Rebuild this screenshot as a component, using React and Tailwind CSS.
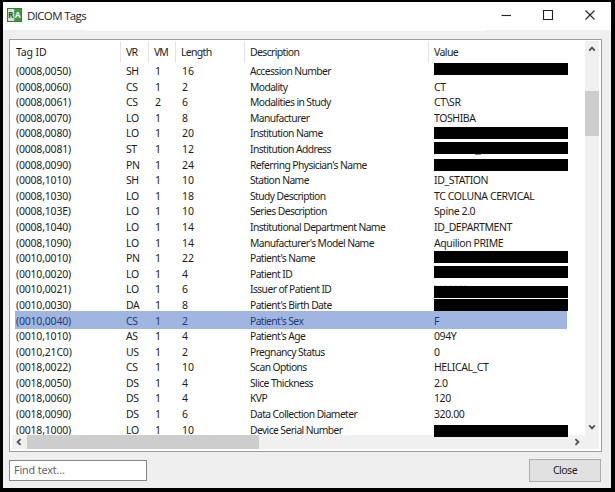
import React from "react";

const BAR = "bg-black w-[134px] h-[12px] relative z-30 ";

const rows = [
  ["(0008,0050)", "SH", "1", "16", "Accession Number", null, "mt-0"],
  ["(0008,0060)", "CS", "1", "2", "Modality", "CT"],
  ["(0008,0061)", "CS", "2", "6", "Modalities in Study", "CT\\SR"],
  ["(0008,0070)", "LO", "1", "8", "Manufacturer", "TOSHIBA"],
  ["(0008,0080)", "LO", "1", "20", "Institution Name", null, "mt-[1.6px]"],
  ["(0008,0081)", "ST", "1", "12", "Institution Address", null, "mt-[1px]"],
  ["(0008,0090)", "PN", "1", "24", "Referring Physician's Name", null, "mt-[2.4px]"],
  ["(0008,1010)", "SH", "1", "10", "Station Name", "ID_STATION"],
  ["(0008,1030)", "LO", "1", "18", "Study Description", "TC COLUNA CERVICAL"],
  ["(0008,103E)", "LO", "1", "10", "Series Description", "Spine 2.0"],
  ["(0008,1040)", "LO", "1", "14", "Institutional Department Name", "ID_DEPARTMENT"],
  ["(0008,1090)", "LO", "1", "14", "Manufacturer's Model Name", "Aquilion PRIME"],
  ["(0010,0010)", "PN", "1", "22", "Patient's Name", null, "mt-[0.8px]"],
  ["(0010,0020)", "LO", "1", "4", "Patient ID", null, "mt-[0.2px]"],
  ["(0010,0021)", "LO", "1", "6", "Issuer of Patient ID", null, "mt-[4.6px]"],
  ["(0010,0030)", "DA", "1", "8", "Patient's Birth Date", null, "mt-[2px]"],
  ["(0010,0040)", "CS", "1", "2", "Patient's Sex", "F"],
  ["(0010,1010)", "AS", "1", "4", "Patient's Age", "094Y"],
  ["(0010,21C0)", "US", "1", "2", "Pregnancy Status", "0"],
  ["(0018,0022)", "CS", "1", "10", "Scan Options", "HELICAL_CT"],
  ["(0018,0050)", "DS", "1", "4", "Slice Thickness", "2.0"],
  ["(0018,0060)", "DS", "1", "4", "KVP", "120"],
  ["(0018,0090)", "DS", "1", "6", "Data Collection Diameter", "320.00"],
  ["(0018,1000)", "LO", "1", "10", "Device Serial Number", null, "mt-[3.2px]"],
];

function Chevron({ d, className }) {
  return (
    <svg className={className} width="8" height="8" viewBox="0 0 8 8" fill="none" stroke="#505050" strokeWidth="1.8">
      <path d={d} />
    </svg>
  );
}

function Row({ row }) {
  const [id, vr, vm, len, desc, value, offset] = row;
  const selected = id === "(0010,0040)";
  return (
    <div className={"relative flex h-[15.6px] shrink-0 items-start pl-[6px] leading-[16px] " + (selected ? "text-[#1f3a78]" : "text-[#1c1c1c]")}>
      {selected && <div className="absolute left-[5px] top-[-1.6px] h-[18px] w-[552px] bg-[#a0b6e0]" />}
      <div className="relative w-[110px] tracking-[-0.2px]">{id}</div>
      <div className="relative w-[29px] tracking-[-0.4px]">{vr}</div>
      <div className="relative w-[27px]">{vm}</div>
      <div className="relative w-[68px]">{len}</div>
      <div className="relative w-[184px] whitespace-nowrap text-[10.3px] tracking-[-0.58px]">{desc}</div>
      {value ? (
        <div className="relative tracking-[-0.42px]">{value}</div>
      ) : (
        <div className={BAR + offset}>
          {id === "(0008,0081)" && <div className="absolute left-[41px] top-[12px] h-px w-[6px] bg-[#888]" />}
          {id === "(0010,0021)" && <div className="absolute left-0 top-[-1px] h-px w-[33px] border-t border-dashed border-[#e2e2e2]" />}
        </div>
      )}
    </div>
  );
}

export default function App() {
  return (
    <div className="h-[492px] w-[615px] overflow-hidden bg-black pl-[3px] pr-[4px] pt-[2px] font-['Noto_Sans','DejaVu_Sans',sans-serif] text-[10.5px] text-[#1c1c1c]">
      <div className="flex h-[486px] flex-col bg-[#efefef]">
        <div className="flex h-[28px] shrink-0 items-center bg-white pl-[4px]">
          <svg width="15" height="14" viewBox="0 0 15 14" className="mt-[-2px]">
            <rect width="15" height="14" fill="#2f7d3b" />
            <rect x="1" y="1" width="6.5" height="12" fill="#d3e5d0" />
            <rect x="7.5" y="1" width="6.5" height="12" fill="#479444" />
            <text x="1.1" y="10.2" fontSize="8.5" fontWeight="700" fill="#245f30">R</text>
            <text x="7.8" y="10.2" fontSize="8.5" fontWeight="700" fill="#e9f6e6">A</text>
          </svg>
          <div className="ml-[5px] font-['Open_Sans',sans-serif] text-[11.5px] tracking-[-0.65px]">DICOM Tags</div>
          <svg className="ml-auto mr-[12px]" width="98" height="14" viewBox="0 0 98 14" fill="none" stroke="#222" strokeWidth="1.1">
            <path d="M0.5 6.5H10" />
            <path d="M42.5 1.5h9v9h-9z" />
            <path d="M84.5 1.5l9 9M93.5 1.5l-9 9" />
          </svg>
        </div>
        <div className="ml-[84px] h-px w-[399px] shrink-0 bg-white" />

        <div className="ml-[6px] mt-[8px] flex h-[413px] w-[593px] shrink-0 flex-col border border-[#9a9ea5] bg-white pb-[2px]">
          <div className="flex h-[395px] shrink-0">
            <div className="w-[575px] shrink-0">
              <div className="flex h-[23px] items-stretch pl-[6px] pt-[1px] leading-[22px]">
                <div className="w-[105px] border-r border-[#e5e5e5] tracking-[-0.15px]">Tag ID</div>
                <div className="w-[28px] border-r border-[#e5e5e5] pl-[5px] tracking-[-0.7px]">VR</div>
                <div className="w-[27px] border-r border-[#e5e5e5] pl-[5px] tracking-[-1px]">VM</div>
                <div className="w-[69px] border-r border-[#e5e5e5] pl-[5px] tracking-[-0.7px]">Length</div>
                <div className="w-[184px] border-r border-[#e5e5e5] pl-[5px] tracking-[-0.65px]">Description</div>
                <div className="pl-[5px] tracking-[-0.6px]">Value</div>
              </div>
              <div className="flex flex-col">
                {rows.map((r) => (
                  <Row key={r[0]} row={r} />
                ))}
              </div>
            </div>
            <div className="mt-px flex w-[14px] flex-col items-center bg-[#f0f0f0]">
              <Chevron d="M1.2 5.6L4 2.6L6.8 5.6" className="mt-[4px]" />
              <div className="mt-[38px] h-[45px] w-[14px] bg-[#cdcdcd]" />
              <Chevron d="M1.2 2.4L4 5.4L6.8 2.4" className="mb-[4px] mt-auto" />
            </div>
          </div>
          <div className="relative z-20 ml-[2px] flex h-[14px] w-[587px] shrink-0 items-center bg-[#f0f0f0]">
            <Chevron d="M5.6 1.2L2.6 4L5.6 6.8" className="ml-[3px]" />
            <div className="ml-[4px] h-[14px] w-[232px] bg-[#cdcdcd]" />
            <Chevron d="M2.4 1.2L5.4 4L2.4 6.8" className="ml-auto mr-[18px]" />
          </div>
        </div>

        <div className="flex items-start pl-[6px] pt-[7px]">
          <div className="mt-px h-[21px] w-[138px] border border-[#858585] bg-white pl-[4px] text-[10.8px] leading-[18px] tracking-[-0.15px] text-[#666]">Find text...</div>
          <div className="ml-[382px] h-[23px] w-[72px] border border-[#adadad] bg-[#e1e1e1] text-center text-[10.5px] leading-[21px] tracking-[-0.5px]">Close</div>
        </div>
      </div>
    </div>
  );
}
